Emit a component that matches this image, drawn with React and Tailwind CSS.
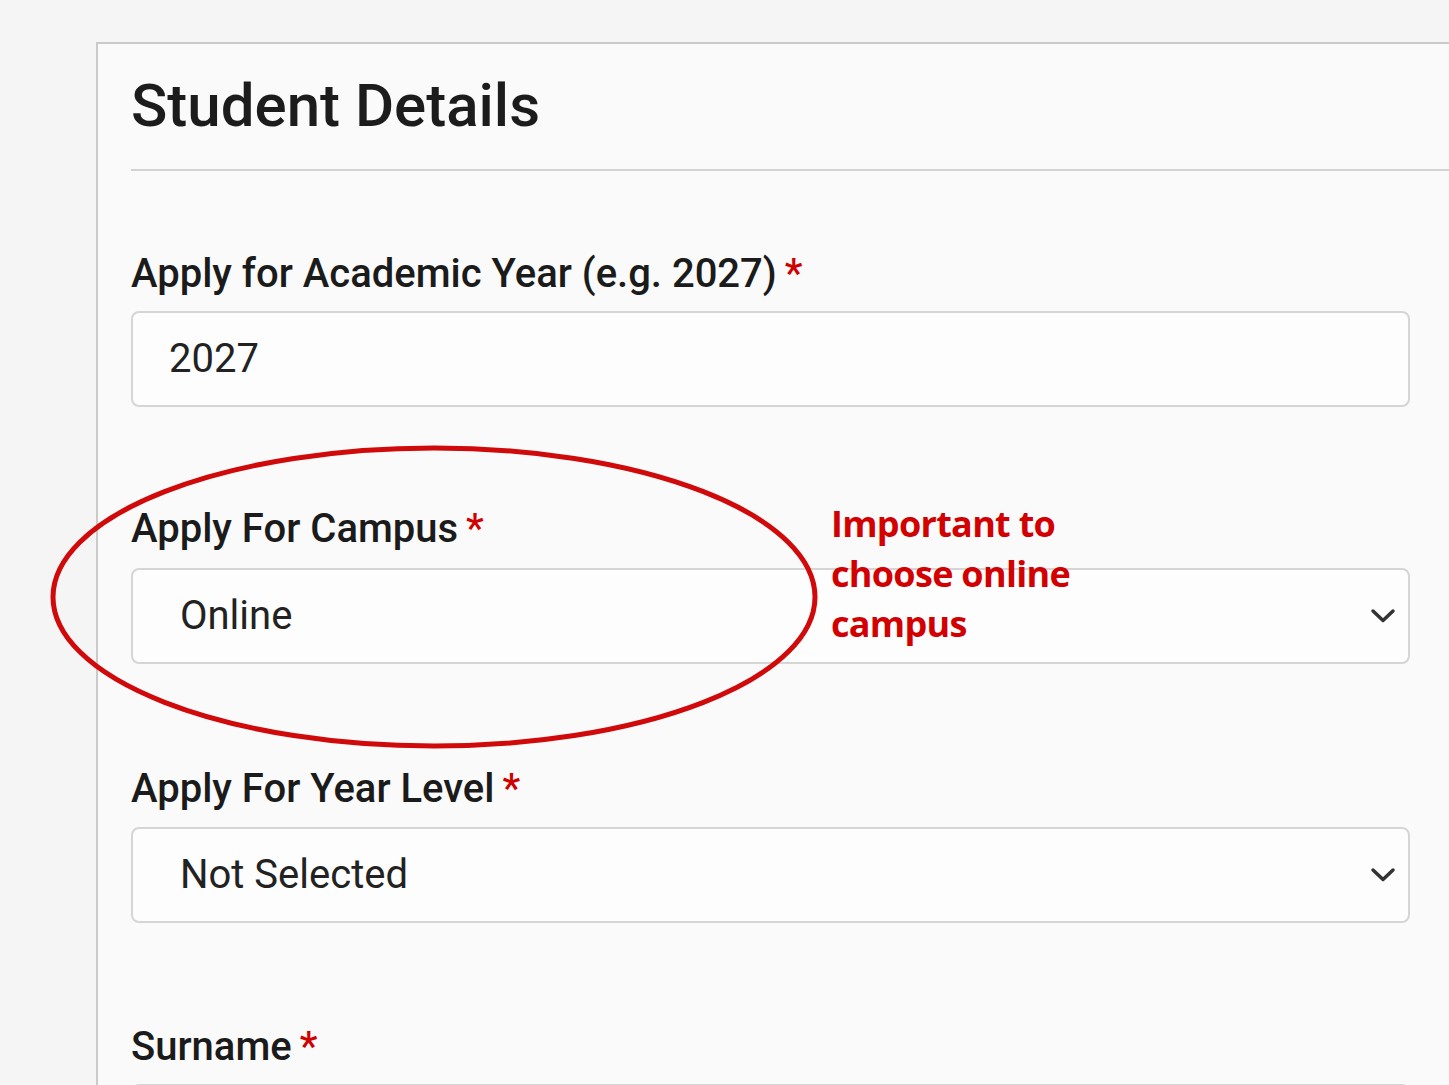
import React from 'react';

const Label = ({ children, className = '' }) => (
    <label className={`block text-[40px] leading-[48px] font-medium text-[#1b1b1b] ${className}`}>
        {children}
        <span className="ml-2 text-[#d10000]">*</span>
    </label>
);

const Chevron = () => (
    <svg width="26" height="16" viewBox="0 0 26 16" fill="none">
        <path d="M3 3 L13 12.5 L23 3" stroke="#333" strokeWidth="3.5" strokeLinecap="round" strokeLinejoin="round" />
    </svg>
);

const TextBox = ({ value }) => (
    <div className="h-[96px] rounded-lg border-2 border-[#d5d5d5] bg-[#fdfdfd] flex items-center pl-[36px] text-[40px] text-[#222]">
        {value}
    </div>
);

const SelectBox = ({ value }) => (
    <div className="h-[96px] rounded-lg border-2 border-[#d5d5d5] bg-[#fdfdfd] flex items-center justify-between pl-[47px] pr-[12px] text-[40px] text-[#222]">
        <span>{value}</span>
        <Chevron />
    </div>
);

const App = () => {
    return (
        <div className="relative h-screen overflow-hidden bg-[#f5f5f5]" style={{ fontFamily: 'Roboto, "Liberation Sans", sans-serif' }}>
            <div className="ml-[96px] mt-[42px] border-l-2 border-t-2 border-[#cacaca] bg-[#fafafa] min-h-[1100px] pt-[26px] pl-[33px]">
                <h1 className="text-[60px] leading-[72px] font-medium text-[#1c1c1c]">Student Details</h1>
                <div className="mt-[27px] border-b-2 border-[#d2d2d2]"></div>

                <div className="pr-[39px]">
                    <Label className="mt-[79px] mb-[13px]">Apply for Academic Year (e.g. 2027)</Label>
                    <TextBox value="2027" />

                    <Label className="mt-[98px] mb-[15px]">Apply For Campus</Label>
                    <SelectBox value="Online" />

                    <Label className="mt-[101px] mb-[14px]">Apply For Year Level</Label>
                    <SelectBox value="Not Selected" />

                    <Label className="mt-[100px] mb-[13px]">Surname</Label>
                    <TextBox value="" />
                </div>
            </div>

            {/* hand-drawn highlight round the campus field */}
            <svg className="absolute left-0 top-0 pointer-events-none" width="1449" height="1085">
                <ellipse cx="434" cy="597" rx="381" ry="149" fill="none" stroke="#d00a0a" strokeWidth="5" />
            </svg>

            <div
                className="absolute left-[831px] top-[499px] text-[36px] leading-[50px] font-bold tracking-[-0.7px] text-[#d20000]"
                style={{ fontFamily: '"Open Sans", sans-serif' }}
            >
                Important to<br />choose online<br />campus
            </div>
        </div>
    );
};

export default App;
